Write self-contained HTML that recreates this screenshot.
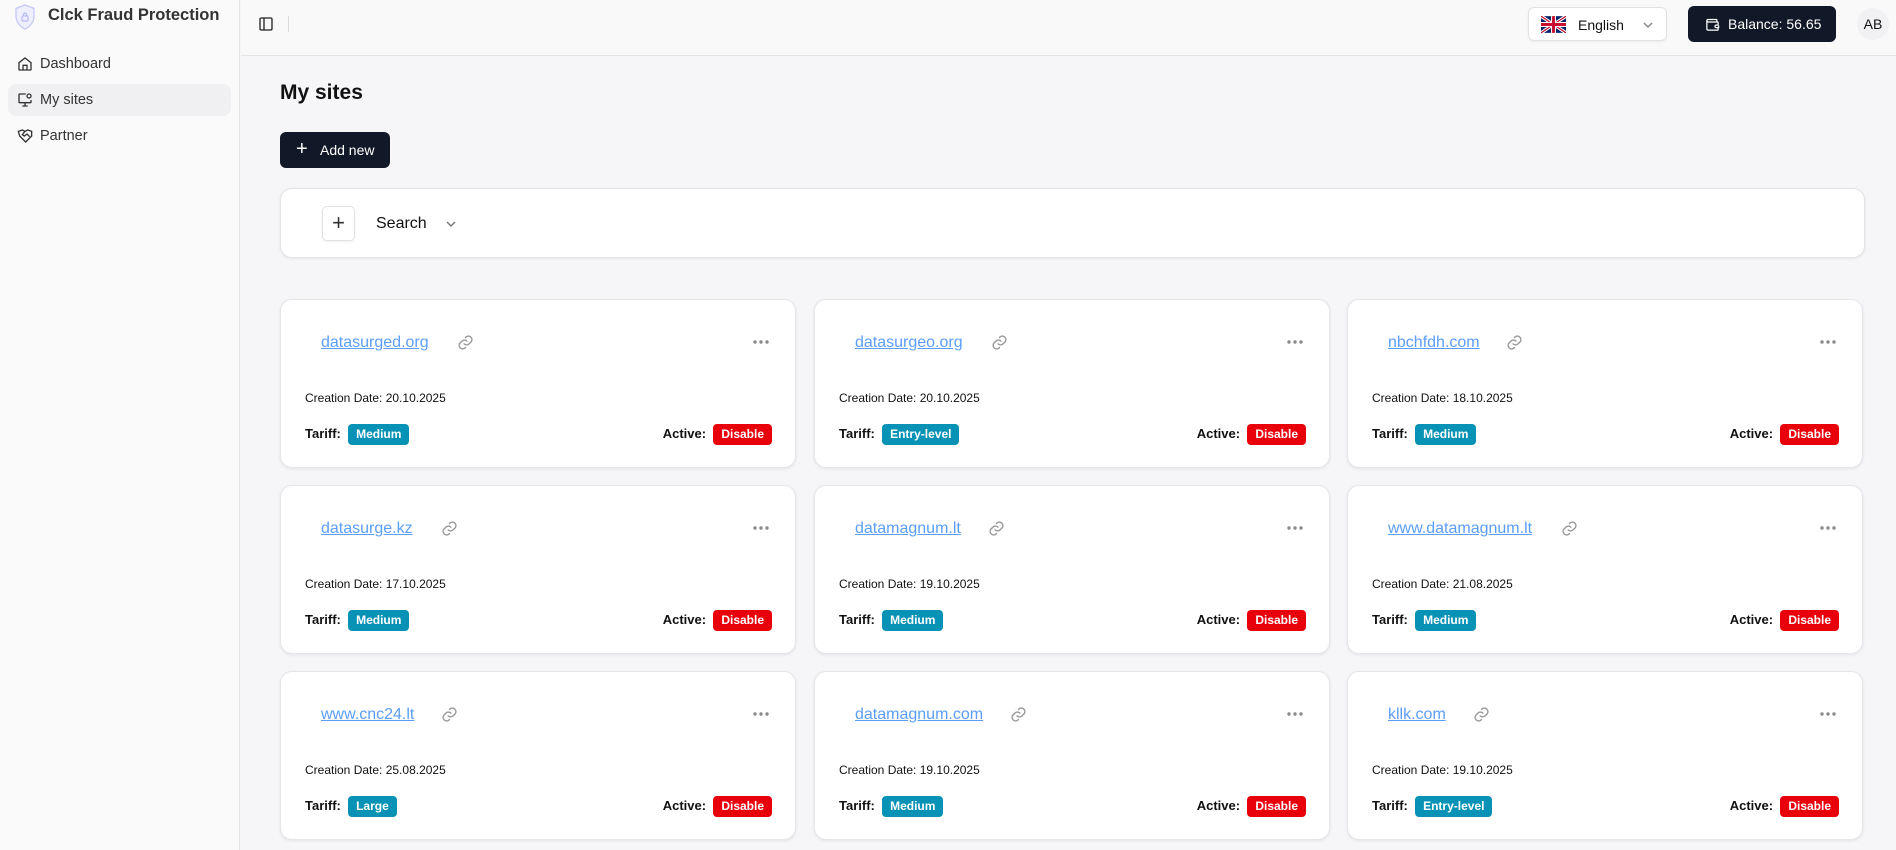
<!DOCTYPE html>
<html><head><meta charset="utf-8"><style>
*{box-sizing:border-box;margin:0;padding:0}
body{width:1896px;height:850px;overflow:hidden;background:#f6f6f9;font-family:"Liberation Sans",Arial,sans-serif;color:#111;position:relative}
.side{position:absolute;left:0;top:0;width:240px;height:850px;background:#fafafa;border-right:1px solid #e5e5e5}
.brand{position:absolute;left:48px;top:6px;font-size:16.5px;font-weight:bold;color:#333}
.nav{position:absolute;left:8px;width:223px;height:32px;border-radius:8px;font-size:14.5px;color:#333}
.nav span{position:absolute;left:32px;top:8px}
.nav svg{position:absolute;left:9px;top:8px}
.header{position:absolute;left:241px;top:0;right:0;height:56px;border-bottom:1px solid #e5e5e5;background:#f9f9fa}
.abs{position:absolute}
.card{position:absolute;width:516px;height:169px;background:#fff;border:1px solid #e6e6ea;border-radius:12px;box-shadow:0 1px 3px rgba(0,0,0,.08)}
.card .lnk{position:absolute;left:40px;top:34px;font-size:16px;color:#5b9ef8;text-decoration:underline}
.card .dots{position:absolute;right:26px;top:40px}
.card .date{position:absolute;left:24px;top:91px;font-size:12px}
.card .tl{position:absolute;left:24px;top:124px;font-size:13px;font-weight:bold;color:#111}
.badge{display:inline-block;color:#fff;font-weight:bold;font-size:12px;padding:3px 8px;border-radius:4px;line-height:15px;vertical-align:middle}
.b1{background:#0892b5}.b2{background:#e8000b}
.card .al{position:absolute;right:23px;top:124px;font-size:13px;font-weight:bold}
</style></head><body>
<div class="side">
 <svg class="abs" style="left:14px;top:4px" width="22" height="26" viewBox="0 0 22 26"><path d="M11 1 L20 4.5 V12 C20 18 16 22.5 11 25 C6 22.5 2 18 2 12 V4.5 Z" fill="#eef0ff" stroke="#c5c9f5" stroke-width="1.3"/><rect x="8" y="12" width="6" height="5" rx="1" fill="none" stroke="#b8bdf0" stroke-width="1.2"/><path d="M9.5 12V10.5a1.5 1.5 0 0 1 3 0V12" fill="none" stroke="#b8bdf0" stroke-width="1.2"/></svg>
 <div class="brand">Clck Fraud Protection</div>
 <div class="nav" style="top:48px"><svg width="16" height="16" viewBox="0 0 24 24" fill="none" stroke="#333" stroke-width="2"><path d="M3 10l9-7 9 7v10a1 1 0 0 1-1 1H4a1 1 0 0 1-1-1z"/><path d="M9 21v-7h6v7"/></svg><span>Dashboard</span></div>
 <div class="nav" style="top:84px;background:#f0f0f2"><svg width="16" height="16" viewBox="0 0 24 24" fill="none" stroke="#333" stroke-width="2"><path d="M13 3H4a1 1 0 0 0-1 1v11a1 1 0 0 0 1 1h16a1 1 0 0 0 1-1v-3"/><path d="M12 16v5M8 21h8"/><circle cx="18" cy="6" r="3"/></svg><span>My sites</span></div>
 <div class="nav" style="top:120px"><svg width="16" height="16" viewBox="0 0 24 24" fill="none" stroke="#333" stroke-width="2"><path d="M2 5l6-2 4 2 4-2 6 2v7l-9 9-9-9z"/><path d="M12 5l-4 5 3 2 4-3 4 4"/></svg><span>Partner</span></div>
</div>
<div class="header">
 <svg class="abs" style="left:17px;top:16px" width="16" height="16" viewBox="0 0 24 24" fill="none" stroke="#222" stroke-width="2"><rect x="3" y="3" width="18" height="18" rx="2"/><path d="M9 3v18"/></svg>
 <div class="abs" style="left:47px;top:16px;width:1px;height:16px;background:#ddd"></div>
 <div class="abs" style="left:1287px;top:7px;width:139px;height:34px;background:#fff;border:1px solid #e2e2e2;border-radius:6px;box-shadow:0 1px 2px rgba(0,0,0,.06)">
  <svg class="abs" style="left:12px;top:8px" width="25" height="17" viewBox="0 0 60 40"><rect width="60" height="40" fill="#012169"/><path d="M0 0L60 40M60 0L0 40" stroke="#fff" stroke-width="8"/><path d="M0 0L60 40M60 0L0 40" stroke="#c8102e" stroke-width="3"/><path d="M30 0V40M0 20H60" stroke="#fff" stroke-width="12"/><path d="M30 0V40M0 20H60" stroke="#c8102e" stroke-width="7"/></svg>
  <span class="abs" style="left:49px;top:9px;font-size:14px">English</span>
  <svg class="abs" style="left:113px;top:12px" width="12" height="10" viewBox="0 0 12 10"><path d="M2 3l4 4 4-4" fill="none" stroke="#888" stroke-width="1.5"/></svg>
 </div>
 <div class="abs" style="left:1447px;top:6px;width:148px;height:36px;background:#111827;border-radius:6px;color:#fff;font-size:14px">
  <svg class="abs" style="left:17px;top:11px" width="15" height="15" viewBox="0 0 24 24" fill="none" stroke="#fff" stroke-width="2"><path d="M19 7V5a1 1 0 0 0-1-1H5a2 2 0 0 0 0 4h15a1 1 0 0 1 1 1v4h-3a2 2 0 0 0 0 4h3a1 1 0 0 0 1-1v-2"/><path d="M3 6v13a2 2 0 0 0 2 2h15a1 1 0 0 0 1-1v-3"/></svg>
  <span class="abs" style="left:40px;top:10px">Balance: 56.65</span>
 </div>
 <div class="abs" style="left:1616px;top:8px;width:32px;height:32px;border-radius:50%;background:#f1f1f4;font-size:14px;text-align:center;line-height:32px">AB</div>
</div>
<div class="abs" style="left:280px;top:81px;font-size:21px;font-weight:bold">My sites</div>
<div class="abs" style="left:280px;top:132px;width:110px;height:36px;background:#111827;border-radius:6px;color:#fff;font-size:14px"><span class="abs" style="left:16px;top:6px;font-size:20px;font-weight:300">+</span><span class="abs" style="left:40px;top:10px">Add new</span></div>
<div class="abs" style="left:280px;top:188px;width:1585px;height:70px;background:#fff;border:1px solid #e3e3e7;border-radius:12px;box-shadow:0 1px 3px rgba(0,0,0,.07)">
 <div class="abs" style="left:41px;top:17px;width:33px;height:35px;border:1px solid #e2e2e2;border-radius:5px;box-shadow:0 1px 2px rgba(0,0,0,.07);text-align:center;line-height:31px;font-size:22px;color:#333">+</div>
 <span class="abs" style="left:95px;top:26px;font-size:16px">Search</span>
 <svg class="abs" style="left:164px;top:30px" width="12" height="10" viewBox="0 0 12 10"><path d="M2 3l4 4 4-4" fill="none" stroke="#777" stroke-width="1.4"/></svg>
</div>
<svg width="0" height="0" style="position:absolute"><defs><g id="lk"><path d="M10 14a5 5 0 0 0 7 0l3-3a5 5 0 0 0-7-7l-1 1" fill="none" stroke="#999" stroke-width="2" stroke-linecap="round"/><path d="M14 10a5 5 0 0 0-7 0l-3 3a5 5 0 0 0 7 7l1-1" fill="none" stroke="#999" stroke-width="2" stroke-linecap="round"/></g><g id="dt"><circle cx="2" cy="2" r="1.7" fill="#8a8a8a"/><circle cx="8" cy="2" r="1.7" fill="#8a8a8a"/><circle cx="14" cy="2" r="1.7" fill="#8a8a8a"/></g></defs></svg>

<div class="card" style="left:280px;top:299px"><a class="lnk">datasurged.org</a><svg class="abs" style="left:176px;top:34px" width="17" height="17" viewBox="0 0 24 24"><use href="#lk"/></svg><svg class="dots" width="16" height="4"><use href="#dt"/></svg><div class="date">Creation Date: 20.10.2025</div><div class="tl">Tariff:&nbsp; <span class="badge b1">Medium</span></div><div class="al">Active:&nbsp; <span class="badge b2">Disable</span></div></div>
<div class="card" style="left:814px;top:299px"><a class="lnk">datasurgeo.org</a><svg class="abs" style="left:176px;top:34px" width="17" height="17" viewBox="0 0 24 24"><use href="#lk"/></svg><svg class="dots" width="16" height="4"><use href="#dt"/></svg><div class="date">Creation Date: 20.10.2025</div><div class="tl">Tariff:&nbsp; <span class="badge b1">Entry-level</span></div><div class="al">Active:&nbsp; <span class="badge b2">Disable</span></div></div>
<div class="card" style="left:1347px;top:299px"><a class="lnk">nbchfdh.com</a><svg class="abs" style="left:158px;top:34px" width="17" height="17" viewBox="0 0 24 24"><use href="#lk"/></svg><svg class="dots" width="16" height="4"><use href="#dt"/></svg><div class="date">Creation Date: 18.10.2025</div><div class="tl">Tariff:&nbsp; <span class="badge b1">Medium</span></div><div class="al">Active:&nbsp; <span class="badge b2">Disable</span></div></div>

<div class="card" style="left:280px;top:485px"><a class="lnk">datasurge.kz</a><svg class="abs" style="left:160px;top:34px" width="17" height="17" viewBox="0 0 24 24"><use href="#lk"/></svg><svg class="dots" width="16" height="4"><use href="#dt"/></svg><div class="date">Creation Date: 17.10.2025</div><div class="tl">Tariff:&nbsp; <span class="badge b1">Medium</span></div><div class="al">Active:&nbsp; <span class="badge b2">Disable</span></div></div>
<div class="card" style="left:814px;top:485px"><a class="lnk">datamagnum.lt</a><svg class="abs" style="left:173px;top:34px" width="17" height="17" viewBox="0 0 24 24"><use href="#lk"/></svg><svg class="dots" width="16" height="4"><use href="#dt"/></svg><div class="date">Creation Date: 19.10.2025</div><div class="tl">Tariff:&nbsp; <span class="badge b1">Medium</span></div><div class="al">Active:&nbsp; <span class="badge b2">Disable</span></div></div>
<div class="card" style="left:1347px;top:485px"><a class="lnk">www.datamagnum.lt</a><svg class="abs" style="left:213px;top:34px" width="17" height="17" viewBox="0 0 24 24"><use href="#lk"/></svg><svg class="dots" width="16" height="4"><use href="#dt"/></svg><div class="date">Creation Date: 21.08.2025</div><div class="tl">Tariff:&nbsp; <span class="badge b1">Medium</span></div><div class="al">Active:&nbsp; <span class="badge b2">Disable</span></div></div>

<div class="card" style="left:280px;top:671px"><a class="lnk">www.cnc24.lt</a><svg class="abs" style="left:160px;top:34px" width="17" height="17" viewBox="0 0 24 24"><use href="#lk"/></svg><svg class="dots" width="16" height="4"><use href="#dt"/></svg><div class="date">Creation Date: 25.08.2025</div><div class="tl">Tariff:&nbsp; <span class="badge b1">Large</span></div><div class="al">Active:&nbsp; <span class="badge b2">Disable</span></div></div>
<div class="card" style="left:814px;top:671px"><a class="lnk">datamagnum.com</a><svg class="abs" style="left:195px;top:34px" width="17" height="17" viewBox="0 0 24 24"><use href="#lk"/></svg><svg class="dots" width="16" height="4"><use href="#dt"/></svg><div class="date">Creation Date: 19.10.2025</div><div class="tl">Tariff:&nbsp; <span class="badge b1">Medium</span></div><div class="al">Active:&nbsp; <span class="badge b2">Disable</span></div></div>
<div class="card" style="left:1347px;top:671px"><a class="lnk">kllk.com</a><svg class="abs" style="left:125px;top:34px" width="17" height="17" viewBox="0 0 24 24"><use href="#lk"/></svg><svg class="dots" width="16" height="4"><use href="#dt"/></svg><div class="date">Creation Date: 19.10.2025</div><div class="tl">Tariff:&nbsp; <span class="badge b1">Entry-level</span></div><div class="al">Active:&nbsp; <span class="badge b2">Disable</span></div></div>
</body></html>
